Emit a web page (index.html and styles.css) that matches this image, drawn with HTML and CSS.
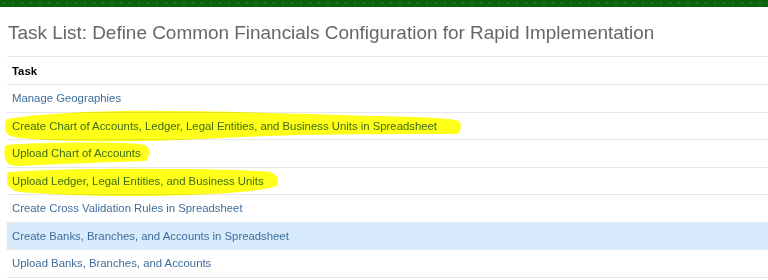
FILE: index.html
```html
<!DOCTYPE html>
<html lang="en">
<head>
    <meta charset="UTF-8">
    <title>Task List</title>
    <link rel="stylesheet" href="styles.css">
</head>
<body>
    <div class="page">
        <div class="topbar"></div>

        <h1 class="page-title">Task List: Define Common Financials Configuration for Rapid Implementation</h1>

        <table class="tasks">
            <thead>
                <tr><th>Task</th></tr>
            </thead>
            <tbody>
                <tr><td><a href="#">Manage Geographies</a></td></tr>
                <tr><td><a href="#">Create Chart of Accounts, Ledger, Legal Entities, and Business Units in Spreadsheet</a></td></tr>
                <tr><td><a href="#">Upload Chart of Accounts</a></td></tr>
                <tr><td><a href="#">Upload Ledger, Legal Entities, and Business Units</a></td></tr>
                <tr><td><a href="#">Create Cross Validation Rules in Spreadsheet</a></td></tr>
                <tr class="selected"><td><a href="#">Create Banks, Branches, and Accounts in Spreadsheet</a></td></tr>
                <tr><td><a href="#">Upload Banks, Branches, and Accounts</a></td></tr>
            </tbody>
        </table>

        <!-- marker scribbles drawn over the list -->
        <svg class="marker" width="768" height="280" viewBox="0 0 768 280">
            <path d="M7,119 C30,115 70,112 120,111 C200,110 300,114 380,116 C420,117 450,118 459,121 C462,125 461,130 458,134 C420,134 360,134 300,135 C250,136 200,140 140,141 C90,142 50,141 20,138 C10,137 5,134 5,128 C5,124 5,121 7,119 Z"/>
            <path d="M6,145 C30,143 80,142 120,143 C135,143 146,144 148,147 C150,152 149,158 146,161 C110,162 60,164 20,166 C10,166 6,164 5,158 C4,152 4,147 6,145 Z"/>
            <path d="M9,172 C40,170 100,168 160,169 C210,169 250,170 270,172 C278,174 279,180 277,186 C265,190 240,193 190,195 C130,197 70,196 20,192 C10,190 7,186 7,180 C7,176 7,173 9,172 Z"/>
        </svg>
    </div>
</body>
</html>
```

FILE: styles.css
```css
html, body {
    margin: 0;
    background-color: white;
    font-family: "Liberation Sans", Arial, sans-serif;
}

.page {
    position: relative;
    width: 768px;
    height: 280px;
    overflow: hidden;
}

.topbar {
    height: 7px;
    background-color: #0b640b;
    background-image: radial-gradient(circle at 4px 3px, #1f7a1f 1px, transparent 1.5px);
    background-size: 9px 7px;
}

.page-title {
    margin: 14px 0 12px 8px;
    font-size: 18.95px;
    font-weight: normal;
    line-height: 23px;
    color: #666666;
}

.tasks {
    margin-left: 7px;
    width: calc(100% - 7px);
    border-collapse: collapse;
    font-size: 11.35px;
}

.tasks th,
.tasks td {
    text-align: left;
    padding: 0 0 0 5px;
    border-top: 1px solid #e4e8ed;
    border-bottom: 1px solid #e4e8ed;
}

.tasks th {
    height: 27px;
    color: #000;
    font-weight: bold;
}

.tasks td {
    height: 26.5px;
}

.tasks a {
    color: #3e6d9c;
    text-decoration: none;
}

.tasks tr.selected td {
    background-color: #d8ebfc;
}

.marker {
    position: absolute;
    top: 0;
    left: 0;
    pointer-events: none;
    mix-blend-mode: multiply;
    fill: #ffff1a;
}
```
